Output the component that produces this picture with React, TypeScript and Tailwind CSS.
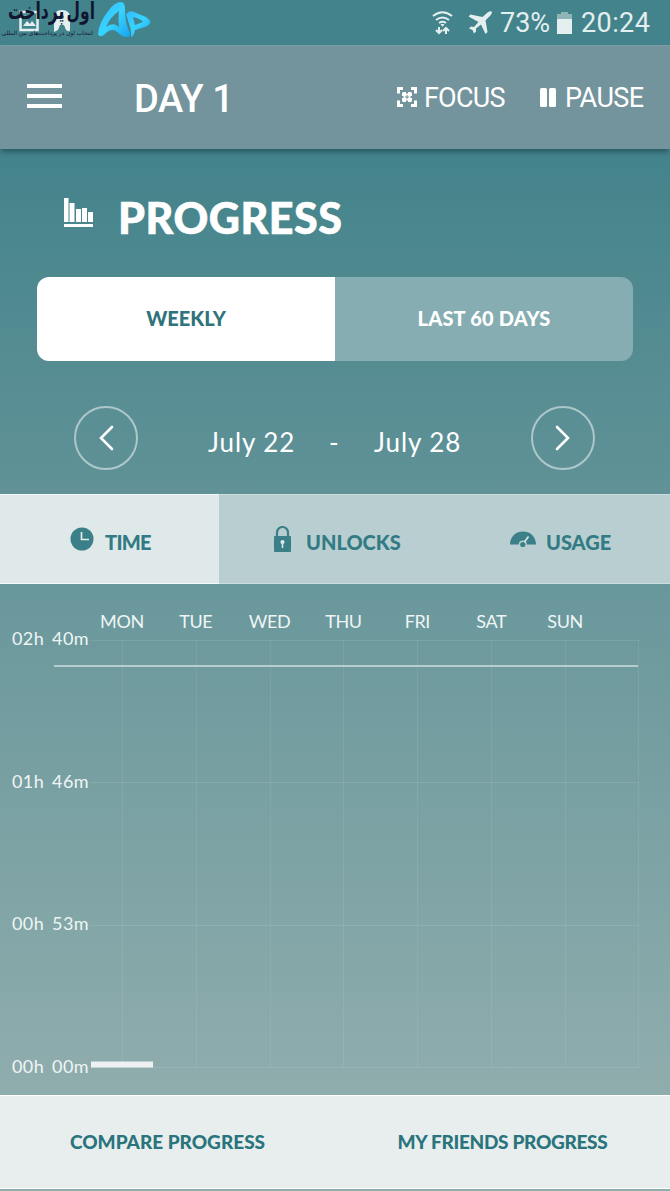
import React from "react";

const days = ["MON", "TUE", "WED", "THU", "FRI", "SAT", "SUN"];
const times = ["02h 40m", "01h 46m", "00h 53m", "00h 00m"];
const columns = [122, 196, 270, 343, 417, 491, 565, 638];
const rows = [1.5, 143.5, 286.5, 428.5];

function StatusBar() {
  return (
    <div className="relative flex h-[45px] items-center justify-end pr-[19px] font-['Roboto',sans-serif] text-[27px] font-light text-[#e4eff0]">
      <svg className="absolute left-0 top-0" width="96" height="44" viewBox="0 0 96 44" fill="none">
        <rect x="20.500" y="12" width="17" height="18" stroke="#e4eff0" strokeWidth="2.500" />
        <path d="M23 26l4-5 3 3 2-3 4 5z" fill="#e4eff0" />
        <circle cx="25" cy="17" r="1.500" fill="#e4eff0" />
        <path d="M54 32V18q0-8 8-8t8 8v14l-4-2-2-5h-4l-2 5z" fill="#e4eff0" />
        <circle cx="62" cy="17" r="2" fill="#44838b" />
      </svg>
      <div dir="rtl" className="absolute left-0 top-0 w-[95px] whitespace-nowrap text-[#10162f]">
        <div className="h-[27px] origin-center scale-y-[1.5] font-['DejaVu_Sans',sans-serif] text-[15.500px] font-bold leading-[25px] [word-spacing:-3px]">اول پرداخت</div>
        <div className="mr-[2px] font-['DejaVu_Sans',sans-serif] text-[5.900px] font-normal leading-[12px]">انتخاب اول در پرداخت‌های بین المللی</div>
      </div>
      <svg className="absolute left-[97px] top-0" width="54" height="40" viewBox="0 0 54 40" fill="none">
        <defs>
          <linearGradient id="logo" x1="0" y1="0" x2="1" y2="1">
            <stop stopColor="#31bdff" />
            <stop offset=".5" stopColor="#38d3ff" />
            <stop offset="1" stopColor="#19a2ee" />
          </linearGradient>
        </defs>
        <path fillRule="evenodd" d="M1 34Q2 22 12 10Q18 2 24 2Q28 2 28 9Q28 22 32 31Q35 37 30 37Q25 37 19 31Q14 28 9 33Q3 39 1 34ZM9 27Q14 23 19 25L22 27Q21 20 22 11Q13 17 9 27Z" fill="url(#logo)" />
        <path fillRule="evenodd" d="M29 14Q33 10 37 12L49 17Q58 23 48 27L38 30Q37 36 34 37Q35 31 32 24ZM36 17L38 25L46 22Q44 19 36 17Z" fill="url(#logo)" />
      </svg>
      <svg width="21" height="24" viewBox="0 0 21 24" fill="none" stroke="#e4eff0" strokeWidth="2" className="mr-[15px]">
        <path d="M1 5Q10.500-2.500 20 5M4 9q6.500-5 13 0M7 12q3.500-2.500 7 0" />
        <path d="M8.500 13h4l-2 3z" fill="#e4eff0" stroke="none" />
        <path d="M7 16v6M4 19l3 3 3-3M14 23v-6M11 20l3-3 3 3" />
      </svg>
      <svg width="24" height="24" viewBox="0 0 24 24" fill="#e4eff0" className="mr-[8px]">
        <path d="M23.500.5c1 1-.1 2.800-1.200 4L17.500 9.500 19.500 21 17.500 23 13 13.500 8 17.500 8 20.500 6 22.500 4.500 19 1 17.500 3 15.500 6 16 10.500 11 .5 5.500 2.500 3.500 14.500 6 19.500 1.500C21 .5 22.500-.3 23.500.5z" />
      </svg>
      <span className="w-[54px] whitespace-nowrap font-normal leading-[44px]">73%</span>
      <svg width="15" height="22" viewBox="0 0 15 22" className="ml-[3px] mr-[9px]">
        <path d="M0 2h4V0h7v2h4v5H0z" fill="#8fb5b9" />
        <path d="M0 7h15v15H0z" fill="#e4eff0" />
      </svg>
      <span className="w-[70px] whitespace-nowrap font-normal leading-[44px] tracking-[0.4px]">20:24</span>
    </div>
  );
}

function Header() {
  return (
    <header className="relative flex h-[104px] items-center border-t border-[#7c9ba3] bg-[#74949d] font-['Roboto',sans-serif] text-white shadow-[0_4px_5px_-1px_rgba(0,30,35,0.4)]">
      <div className="ml-[27px] mt-[-3px] flex w-[35px] flex-col gap-[6px]">
        <i className="h-[4px] bg-white" />
        <i className="h-[4px] bg-white" />
        <i className="h-[4px] bg-white" />
      </div>
      <h1 className="ml-[72px] mt-[2px] w-[263px] text-[38px] font-medium leading-[44px] tracking-[-0.5px]">DAY 1</h1>
      <svg width="20" height="20" viewBox="0 0 20 20" fill="none" stroke="white" className="mr-[7px] mt-[-1px]">
        <path strokeWidth="3" d="M1.500 6.500V1.500H6M14 1.500h4.500v5M18.500 13.500v5H14M6 18.500H1.500v-5" />
        <path fill="white" stroke="none" d="M5 6.500Q5 5 6.500 5H9v1.500h2V5h2.500Q15 5 15 6.500V9h-1.500v2H15v2.500q0 1.500-1.500 1.500H11v-1.500H9V15H6.500Q5 15 5 13.500V11h1.500V9H5z" />
        <path fill="#74949d" stroke="none" d="M9.500 8h1v1.500H12v1h-1.500V12h-1v-1.500H8v-1h1.500z" />
      </svg>
      <span className="w-[116px] whitespace-nowrap text-[27px] leading-[32px] tracking-[-0.8px]">FOCUS</span>
      <svg width="16" height="19" viewBox="0 0 16 19" fill="white" className="mr-[9px]">
        <rect width="7" height="19" rx="1.500" />
        <rect x="9" width="7" height="19" rx="1.500" />
      </svg>
      <span className="whitespace-nowrap text-[27px] leading-[32px] tracking-[-0.6px]">PAUSE</span>
    </header>
  );
}

function RoundArrow({ path }: { path: string }) {
  return (
    <button className="flex h-[64px] w-[64px] items-center justify-center rounded-full border-2 border-white/50">
      <svg width="16" height="26" viewBox="0 0 16 26" fill="none" stroke="white" strokeWidth="2.600" strokeLinecap="round" strokeLinejoin="miter">
        <path d={path} />
      </svg>
    </button>
  );
}

function Tabs() {
  return (
    <div className="flex h-[90px] text-[20px] font-black text-[#327b84]">
      <div className="flex w-[219px] items-center border-y border-white/70 bg-[#dfe9ea] pb-px pl-[70px]">
        <svg width="24" height="24" viewBox="0 0 24 24">
          <circle cx="12" cy="12" r="11.500" fill="#3b7f88" />
          <path d="M11.500 5v7.500H19" fill="none" stroke="#e2ecec" strokeWidth="1.700" />
        </svg>
        <span className="ml-[11px] mt-[6px] tracking-[-0.7px]">TIME</span>
      </div>
      <div className="flex flex-1 items-center border-y border-white/30 bg-[#b8ced1] pb-px pl-[55px]">
        <svg width="17" height="26" viewBox="0 0 17 26">
          <path d="M3 12V6.500a5.500 5.500 0 0 1 11 0V12" fill="none" stroke="#3b7f88" strokeWidth="2.200" />
          <rect y="10" width="17" height="16" rx="1" fill="#3b7f88" />
          <circle cx="8.500" cy="16" r="2.100" fill="#dce8e9" />
          <path d="M8.500 17v5" stroke="#dce8e9" strokeWidth="1.500" />
        </svg>
        <span className="ml-[15px] mt-[6px] w-[204px] whitespace-nowrap">UNLOCKS</span>
        <svg width="26" height="17" viewBox="0 0 26 17" className="mt-[1px]">
          <path d="M0 13.500C0-4 26-4 26 13.500H16.800a4 4 0 0 0-8 0z" fill="#3b7f88" />
          <circle cx="12.800" cy="13.500" r="2.600" fill="#3b7f88" />
          <path d="M14.500 11l4-5.500" stroke="#dce8e9" strokeWidth="1.600" />
        </svg>
        <span className="ml-[10px] mt-[6px]">USAGE</span>
      </div>
    </div>
  );
}

function Chart() {
  return (
    <section className="flex h-[511px] flex-col pt-[25px] text-[#eff5f5]">
      <div className="ml-[85px] grid h-[24px] w-[517px] grid-cols-7 text-center text-[18px] leading-[24px] tracking-[-0.4px]">
        {days.map((day) => <span key={day}>{day}</span>)}
      </div>
      <div className="relative h-[435px]">
        <svg className="absolute left-0 top-[6px]" width="670" height="430" viewBox="0 0 670 430">
          {rows.map((y) => <path key={y} d={`M90 ${y}H639`} stroke="white" strokeOpacity=".1" />)}
          {columns.map((x) => <path key={x} d={`M${x + 0.5} 1V428`} stroke="white" strokeOpacity=".08" />)}
          <path d="M54 27H638" stroke="#b5cdcf" strokeWidth="2" />
          <path d="M91 425.500H153" stroke="#edf1f1" strokeWidth="6" />
        </svg>
        <div className="-mt-[7px] flex h-[452px] w-[89px] flex-col justify-between text-right text-[18px] leading-[24px] tracking-[0.4px] [word-spacing:3px]">
          {times.map((time) => <span key={time} className="whitespace-nowrap">{time}</span>)}
        </div>
      </div>
    </section>
  );
}

export default function App() {
  return (
    <main className="flex h-[1191px] w-[670px] flex-col overflow-hidden bg-[linear-gradient(180deg,#43838b_0px,#43838b_150px,#609297_490px,#6a989c_600px,#90adad_1095px,#90adad_1191px)] font-['Lato',sans-serif]">
      <StatusBar />
      <Header />
      <div className="flex h-[128px] items-start pl-[64px] pt-[49px] text-white">
        <svg width="29" height="30" viewBox="0 0 29 30" fill="white">
          <path d="M0 0h4.500v24H0zM5.500 5h5v19h-5zM12 11h5v13h-5zM18 10h5v14h-5zM24 14h5v10h-5zM0 26h29v3H0z" />
        </svg>
        <h2 className="ml-[25px] mt-[-2px] whitespace-nowrap text-[43px] font-black leading-[43px] tracking-[0.5px] [-webkit-text-stroke:0.6px_white]">PROGRESS</h2>
      </div>
      <div className="mx-[37px] flex h-[84px] overflow-hidden rounded-[12px] text-[20px] font-black">
        <div className="flex flex-1 items-center justify-center bg-white pb-[2px] text-[#2f737b]">WEEKLY</div>
        <div className="flex flex-1 items-center justify-center bg-[#86adb2] pb-[2px] tracking-[0.2px] text-white">LAST 60 DAYS</div>
      </div>
      <div className="flex h-[133px] items-start pl-[74px] pt-[45px] text-[26px] text-white">
        <RoundArrow path="M14 2L3 13L14 24" />
        <span className="ml-[70px] mt-[20px] w-[121px] whitespace-nowrap leading-[32px] tracking-[0.9px]">July 22</span>
        <span className="mt-[20px] w-[45px] leading-[32px]">-</span>
        <span className="mt-[20px] w-[157px] whitespace-nowrap leading-[32px] tracking-[0.9px]">July 28</span>
        <RoundArrow path="M2 2L13 13L2 24" />
      </div>
      <Tabs />
      <Chart />
      <footer className="flex h-[94px] border-y border-white bg-[#e8eeee] text-[19px] font-black text-[#2a747d]">
        <div className="flex w-[335px] items-center justify-center whitespace-nowrap">COMPARE PROGRESS</div>
        <div className="flex w-[335px] items-center justify-center whitespace-nowrap tracking-[-0.3px]">MY FRIENDS PROGRESS</div>
      </footer>
    </main>
  );
}
